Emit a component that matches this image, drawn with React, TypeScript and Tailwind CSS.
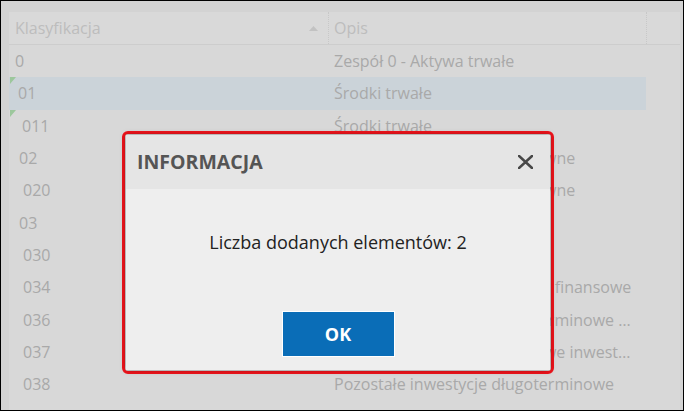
import React from "react";

const rows: { code: string; indent: number; opis: string; selected?: boolean; flag?: boolean }[] = [
  { code: "0", indent: 0, opis: "Zespół 0 - Aktywa trwałe" },
  { code: "01", indent: 3, opis: "Środki trwałe", selected: true, flag: true },
  { code: "011", indent: 7, opis: "Środki trwałe", flag: true },
  { code: "02", indent: 4, opis: "Wartości niematerialne i prawne" },
  { code: "020", indent: 8, opis: "Wartości niematerialne i prawne" },
  { code: "03", indent: 4, opis: "Inwestycje długoterminowe" },
  { code: "030", indent: 8, opis: "Inwestycje długoterminowe" },
  { code: "034", indent: 8, opis: "Inne długoterminowe aktywa finansowe" },
  { code: "036", indent: 8, opis: "Pozostałe inwestycje długoterminowe aktywa" },
  { code: "037", indent: 8, opis: "Udziały i akcje długoterminowe inwestycje finansowe" },
  { code: "038", indent: 8, opis: "Pozostałe inwestycje długoterminowe" },
];

export default function App() {
  return (
    <div
      className="relative w-[684px] h-[411px] overflow-hidden border border-black bg-[#d3d3d3]"
      style={{ fontFamily: '"Open Sans", "Noto Sans", sans-serif' }}
    >
      <div className="ml-[8px] mt-[11px] mr-[3px] h-[400px] bg-[#d8d8d8]">
        {/* header */}
        <div className="flex h-[33px] border-b border-[#cdcdcd] bg-[#d9d9d9] text-[16px] text-[#bdbdbd]">
          <div className="flex w-[319px] items-center justify-between pl-[6px] pr-[10px]">
            <span>Klasyfikacja</span>
            <svg width="9" height="6" viewBox="0 0 9 6">
              <path d="M0 6 L4.5 1 L9 6 Z" fill="#c2c2c2" />
            </svg>
          </div>
          <div className="flex w-[318px] items-center border-l border-dotted border-[#c8c8c8] pl-[5px]">
            Opis
          </div>
          <div className="flex-1 border-l border-dotted border-[#c8c8c8]" />
        </div>
        {rows.map((r) => (
          <div key={r.code} className="relative flex h-[32.3px] items-center text-[16px] text-[#a9a9a9]">
            {r.flag && (
              <div className="absolute left-[1px] top-0 h-0 w-0 border-t-[7px] border-r-[6px] border-t-[#9cc79c] border-r-transparent" />
            )}
            <div
              className={`flex h-full w-[319px] items-center ${r.selected ? "bg-[#cbd3d9]" : ""}`}
              style={{ paddingLeft: 6 + r.indent }}
            >
              {r.code}
            </div>
            <div
              className={`flex h-full w-[318px] min-w-0 items-center pl-[6px] pr-[9px] ${r.selected ? "bg-[#cbd3d9]" : ""}`}
            >
              <span className="block min-w-0 truncate">{r.opis}</span>
            </div>
          </div>
        ))}
      </div>

      {/* dialog with red highlight */}
      <div className="absolute left-[121px] top-[130px] h-[243px] w-[432px] rounded-[6px] border-[3px] border-[#f0141c] p-[1px]">
        <div className="flex h-full flex-col bg-[#eeeeee] shadow-[0_0_6px_rgba(0,0,0,0.35)]">
          <div className="flex h-[54px] shrink-0 items-center justify-between bg-[#e5e5e5] pl-[11px] pr-[17px]">
            <span className="text-[19.5px] font-bold text-[#555555]">INFORMACJA</span>
            <svg width="15" height="14" viewBox="0 0 15 14">
              <path d="M1 1 L14 13 M14 1 L1 13" stroke="#484848" strokeWidth="2.6" strokeLinecap="square" />
            </svg>
          </div>
          <div className="flex flex-1 flex-col items-center">
            <div className="mt-[40px] text-[18px] leading-[27px] text-[#222222]">Liczba dodanych elementów: 2</div>
            <button className="mt-[55px] flex h-[46px] w-[113px] items-center justify-center border border-white bg-[#0a6db7] text-[18px] font-bold text-white">
              OK
            </button>
          </div>
        </div>
      </div>
    </div>
  );
}
